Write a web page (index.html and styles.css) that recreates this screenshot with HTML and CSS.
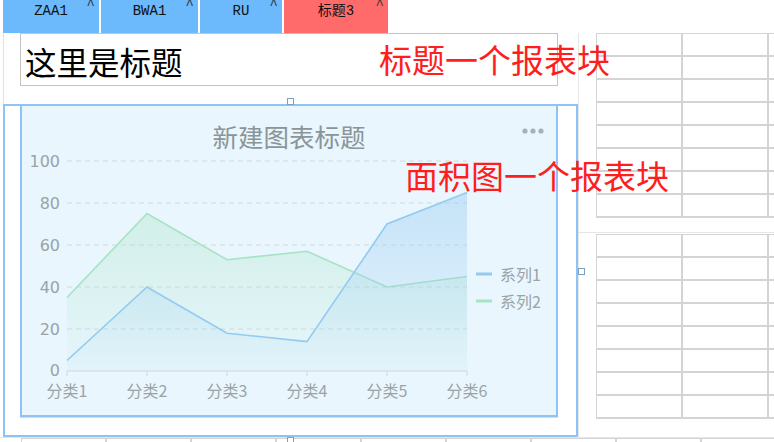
FILE: index.html
```html
<!DOCTYPE html>
<html lang="zh">
<head>
    <meta charset="UTF-8">
    <title>报表设计</title>
    <link rel="stylesheet" href="styles.css">
</head>
<body>
    <nav class="tabs">
        <div class="tab tab-1">ZAA1<span class="tab-close">^</span></div>
        <div class="tab tab-2">BWA1<span class="tab-close">^</span></div>
        <div class="tab tab-3">RU<span class="tab-close">^</span></div>
        <div class="tab tab-4 active">标题3<span class="tab-close">^</span></div>
    </nav>

    <main class="board">
        <section class="col-left">
            <div class="title-area">
                <div class="title-block">这里是标题</div>
            </div>
            <div class="chart-frame">
                <div class="chart">
                    <svg width="534" height="309" viewBox="0 0 534 309">
                        <defs>
                            <linearGradient id="fillBlue" x1="0" y1="0" x2="0" y2="1">
                                <stop offset="0" stop-color="#8fc6f0" stop-opacity="0.4"/>
                                <stop offset="1" stop-color="#8fc6f0" stop-opacity="0.04"/>
                            </linearGradient>
                            <linearGradient id="fillGreen" x1="0" y1="0" x2="0" y2="1">
                                <stop offset="0" stop-color="#a6e3c4" stop-opacity="0.35"/>
                                <stop offset="1" stop-color="#a6e3c4" stop-opacity="0.04"/>
                            </linearGradient>
                        </defs>

                        <text class="chart-title" x="267" y="29">新建图表标题</text>
                        <circle class="more" cx="503" cy="25" r="2.6"/>
                        <circle class="more" cx="511" cy="25" r="2.6"/>
                        <circle class="more" cx="519" cy="25" r="2.6"/>

                        <g class="grid">
                            <line x1="45" y1="55" x2="445" y2="55"/>
                            <line x1="45" y1="97" x2="445" y2="97"/>
                            <line x1="45" y1="139" x2="445" y2="139"/>
                            <line x1="45" y1="181" x2="445" y2="181"/>
                            <line x1="45" y1="223" x2="445" y2="223"/>
                        </g>

                        <g class="y-labels">
                            <text x="38" y="55">100</text>
                            <text x="38" y="97">80</text>
                            <text x="38" y="139">60</text>
                            <text x="38" y="181">40</text>
                            <text x="38" y="223">20</text>
                            <text x="38" y="264">0</text>
                        </g>

                        <!-- 系列2 -->
                        <path fill="url(#fillGreen)" d="M45 191.5 L125 107.5 L205 153.7 L285 145.3 L365 181 L445 170.5 L445 265 L45 265 Z"/>
                        <polyline class="line-green" points="45,191.5 125,107.5 205,153.7 285,145.3 365,181 445,170.5"/>

                        <!-- 系列1 -->
                        <path fill="url(#fillBlue)" d="M45 254.5 L125 181 L205 227.2 L285 235.6 L365 118 L445 86.5 L445 265 L45 265 Z"/>
                        <polyline class="line-blue" points="45,254.5 125,181 205,227.2 285,235.6 365,118 445,86.5"/>

                        <g class="axis">
                            <line x1="45" y1="265" x2="445" y2="265"/>
                            <line x1="45" y1="265" x2="45" y2="270"/>
                            <line x1="125" y1="265" x2="125" y2="270"/>
                            <line x1="205" y1="265" x2="205" y2="270"/>
                            <line x1="285" y1="265" x2="285" y2="270"/>
                            <line x1="365" y1="265" x2="365" y2="270"/>
                            <line x1="445" y1="265" x2="445" y2="270"/>
                        </g>

                        <g class="x-labels">
                            <text x="45" y="284">分类1</text>
                            <text x="125" y="284">分类2</text>
                            <text x="205" y="284">分类3</text>
                            <text x="285" y="284">分类4</text>
                            <text x="365" y="284">分类5</text>
                            <text x="445" y="284">分类6</text>
                        </g>

                        <g class="legend">
                            <line class="line-blue" x1="454" y1="168" x2="470" y2="168"/>
                            <text x="478" y="168">系列1</text>
                            <line class="line-green" x1="454" y1="195" x2="470" y2="195"/>
                            <text x="478" y="195">系列2</text>
                        </g>
                    </svg>
                </div>
                <span class="handle handle-top"></span>
                <span class="handle handle-right"></span>
                <span class="handle handle-bottom"></span>
            </div>
        </section>

        <section class="col-right">
            <div class="sheet-cell">
                <table class="sheet">
                    <tr><td></td><td></td><td></td></tr>
                    <tr><td></td><td></td><td></td></tr>
                    <tr><td></td><td></td><td></td></tr>
                    <tr><td></td><td></td><td></td></tr>
                    <tr><td></td><td></td><td></td></tr>
                    <tr><td></td><td></td><td></td></tr>
                    <tr><td></td><td></td><td></td></tr>
                    <tr><td></td><td></td><td></td></tr>
                </table>
            </div>
            <div class="sheet-cell sheet-cell-2">
                <table class="sheet">
                    <tr><td></td><td></td><td></td></tr>
                    <tr><td></td><td></td><td></td></tr>
                    <tr><td></td><td></td><td></td></tr>
                    <tr><td></td><td></td><td></td></tr>
                    <tr><td></td><td></td><td></td></tr>
                    <tr><td></td><td></td><td></td></tr>
                    <tr><td></td><td></td><td></td></tr>
                    <tr><td></td><td></td><td></td></tr>
                </table>
            </div>
        </section>
    </main>

    <div class="bottom-row">
        <table class="sheet sheet-wide">
            <tr><td></td><td></td><td></td><td></td><td></td><td></td><td></td><td></td><td></td></tr>
        </table>
    </div>

    <div class="note note-title">标题一个报表块</div>
    <div class="note note-chart">面积图一个报表块</div>
</body>
</html>
```

FILE: styles.css
```css
html, body {
    margin: 0;
    height: 100%;
    overflow: hidden;
    background: #fff;
}
body {
    position: relative;
    font-family: "Noto Sans CJK SC", sans-serif;
}

/* tabs */
.tabs {
    display: flex;
    gap: 2px;
    padding-left: 3px;
    height: 33px;
}
.tab {
    position: relative;
    height: 33px;
    background: #6cb9fb;
    color: #111;
    font: 14px "Liberation Mono", "Noto Sans CJK SC", monospace;
    line-height: 22px;
    text-align: center;
}
.tab-1 { width: 96px; }
.tab-2 { width: 97px; }
.tab-3 { width: 82px; }
.tab-4 { width: 104px; }
.tab.active {
    background: #ff6b6b;
}
.tab-close {
    position: absolute;
    top: 0;
    right: 4px;
    font-size: 14px;
    line-height: 10px;
    color: #333;
}

/* board */
.board {
    display: grid;
    grid-template-columns: 575px minmax(0, 1fr);
    margin-left: 3px;
}
.title-area {
    height: 71px;
    border-left: 1px solid #e2e2e2;
    padding-left: 16px;
    box-sizing: border-box;
}
.title-block {
    width: 538px;
    height: 53px;
    box-sizing: border-box;
    border: 1px solid #c4c4c4;
    padding: 4px 0 0 4px;
    font-size: 31.5px;
    line-height: 47px;
    color: #000;
}

.chart-frame {
    position: relative;
    border: 2px solid #8fc3f4;
    padding: 0 18px 18px 15px;
}
.chart {
    height: 309px;
    background: #e9f6fd;
    border: 2px solid #8fc3f4;
    border-top: 0;
    box-shadow: 0 1px 0 #d3dde2;
}
.chart svg {
    display: block;
    font-family: "Noto Sans CJK SC", "DejaVu Sans", sans-serif;
}
.chart-title {
    font-size: 25.5px;
    fill: #8a9599;
    text-anchor: middle;
    dominant-baseline: central;
}
.more { fill: #a7b0b5; }
.grid line {
    stroke: #d9e3e8;
    stroke-width: 1.5;
    stroke-dasharray: 5 4;
}
.axis line {
    stroke: #cdd7dc;
    stroke-width: 1;
}
.y-labels text {
    font-family: "DejaVu Sans", sans-serif;
    font-size: 16px;
    fill: #9aa3a8;
    text-anchor: end;
    dominant-baseline: central;
}
.x-labels text {
    font-size: 16px;
    fill: #9aa3a8;
    text-anchor: middle;
    dominant-baseline: central;
}
.legend text {
    font-size: 16px;
    fill: #9aa3a8;
    dominant-baseline: central;
}
.line-blue {
    fill: none;
    stroke: #93caf0;
    stroke-width: 1.6;
}
.line-green {
    fill: none;
    stroke: #a6e3c4;
    stroke-width: 1.6;
}
.legend line { stroke-width: 3; }

.handle {
    position: absolute;
    width: 5px;
    height: 5px;
    border: 1px solid #7d9fc0;
    background: #fff;
}
.handle-top {
    top: -8px;
    left: calc(50% - 4px);
}
.handle-right {
    right: -9px;
    top: calc(50% - 3px);
}
.handle-bottom {
    bottom: -9px;
    left: calc(50% - 4px);
}

/* sheets on the right */
.col-right {
    overflow: hidden;
    border-left: 1px solid #e6e6e6;
}
.sheet-cell {
    height: 200px;
    box-sizing: border-box;
    border-bottom: 1px solid #e6e6e6;
    padding-left: 17px;
}
.sheet-cell-2 {
    height: 204px;
    padding-top: 1px;
    border-bottom: 0;
}
.sheet {
    table-layout: fixed;
    width: 259px;
    border-collapse: separate;
    border-spacing: 0;
    border-top: 1px solid #d4d4d4;
    border-left: 1px solid #d4d4d4;
}
.sheet td {
    width: 84px;
    height: 21px;
    padding: 0;
    border-right: 2px solid #d4d4d4;
    border-bottom: 2px solid #d4d4d4;
}

.bottom-row {
    border-top: 1px solid #e6e6e6;
    padding-left: 21px;
    overflow: hidden;
}
.sheet-wide {
    width: 766px;
}
.sheet-wide td {
    width: 83px;
}

/* annotations */
.note {
    position: absolute;
    color: #ff1e1e;
    font-size: 33px;
    line-height: 1;
    white-space: nowrap;
}
.note-title {
    left: 379px;
    top: 43px;
}
.note-chart {
    left: 405px;
    top: 159px;
}
```
